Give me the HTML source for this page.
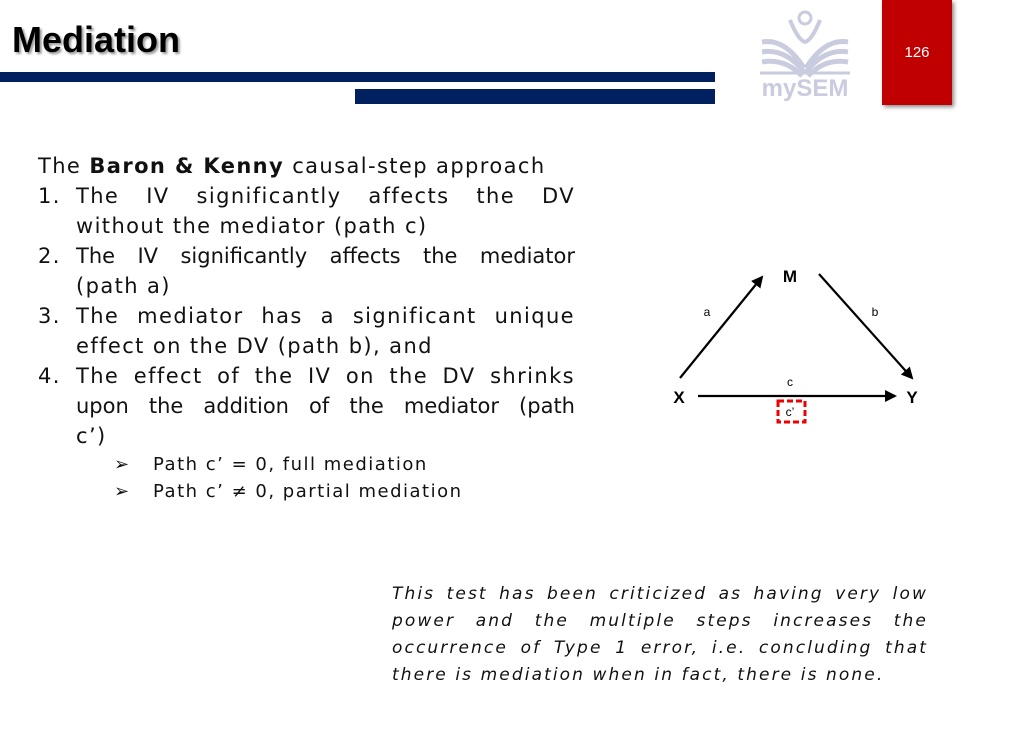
<!DOCTYPE html>
<html><head><meta charset="utf-8"><style>
html,body{margin:0;padding:0}
body{width:1010px;height:750px;position:relative;background:#fff;overflow:hidden;font-family:"DejaVu Sans","Liberation Sans",sans-serif;color:#111}
.a{position:absolute;white-space:nowrap}
.t{font-family:"Liberation Sans Narrow","Liberation Sans",sans-serif;font-weight:bold;font-size:36px;left:12px;top:19px;text-shadow:2px 2px 2px #999;color:#000}
.bar{position:absolute;background:#002060}
.ln{position:absolute;font-size:21px;line-height:30px;height:30px;white-space:nowrap;letter-spacing:1.4px}
.j{text-align:justify;text-align-last:justify}
.it{position:absolute;left:392px;width:536px;font-style:italic;font-size:17px;line-height:27px;height:27px;white-space:nowrap;letter-spacing:2.1px}
</style></head><body>
<div class="a t">Mediation</div>
<div class="bar" style="left:0;top:72px;width:715px;height:10px"></div>
<div class="bar" style="left:355px;top:89px;width:360px;height:15px"></div>
<div style="position:absolute;left:882px;top:0;width:70px;height:105px;background:#c00000;box-shadow:2px 2px 4px #888"></div>
<div class="a" style="left:882px;width:70px;top:44px;text-align:center;color:#fff;font-family:'Liberation Sans',sans-serif;font-size:15px">126</div>
<svg style="position:absolute;left:740px;top:0" width="130" height="105">
<g fill="none" stroke="#c9cbdf" stroke-width="5">
<circle cx="65" cy="18" r="6" stroke-width="3"/>
<path d="M50 20 Q58 40 65 42 Q72 40 80 20" stroke-width="4"/>
<path d="M22 42 Q45 38 64 68 M22 52 Q45 48 64 72 M22 62 Q45 58 62 76"/>
<path d="M108 42 Q85 38 66 68 M108 52 Q85 48 66 72 M108 62 Q85 58 68 76"/>
<path d="M20 73 L110 73" stroke-width="3"/>
</g>
<text x="65" y="96" text-anchor="middle" font-family="Liberation Sans" font-weight="bold" font-size="24" fill="#c9cbdf">mySEM</text>
</svg>

<div class="ln" style="left:38px;top:151px">The <b>Baron &amp; Kenny</b> causal-step approach</div>
<div class="ln" style="left:38px;top:181px">1.</div>
<div class="ln j" style="left:76px;width:499px;top:181px">The IV significantly affects the DV</div>
<div class="ln" style="left:76px;top:211px">without the mediator (path c)</div>
<div class="ln" style="left:38px;top:241px">2.</div>
<div class="ln j" style="left:76px;width:499px;top:241px;letter-spacing:0">The IV significantly affects the mediator</div>
<div class="ln" style="left:76px;top:271px">(path a)</div>
<div class="ln" style="left:38px;top:301px">3.</div>
<div class="ln j" style="left:76px;width:499px;top:301px">The mediator has a significant unique</div>
<div class="ln" style="left:76px;top:331px">effect on the DV (path b), and</div>
<div class="ln" style="left:38px;top:361px">4.</div>
<div class="ln j" style="left:76px;width:499px;top:361px">The effect of the IV on the DV shrinks</div>
<div class="ln j" style="left:76px;width:499px;top:391px;letter-spacing:0">upon the addition of the mediator (path</div>
<div class="ln" style="left:76px;top:421px">c’)</div>
<div class="ln" style="left:114px;top:450px;font-size:18px">&#10146;</div>
<div class="ln" style="left:153px;top:450px;font-size:18px;letter-spacing:1.5px">Path c’ = 0, full mediation</div>
<div class="ln" style="left:114px;top:477px;font-size:18px">&#10146;</div>
<div class="ln" style="left:153px;top:477px;font-size:18px;letter-spacing:1.5px">Path c’ ≠ 0, partial mediation</div>

<svg style="position:absolute;left:660px;top:250px" width="280" height="180" font-family="Liberation Sans,sans-serif">
<defs><marker id="ar" markerWidth="12" markerHeight="12" refX="10" refY="6" orient="auto" markerUnits="userSpaceOnUse"><path d="M0 0 L12 6 L0 12 Z" fill="#000"/></marker></defs>
<g stroke="#000" stroke-width="2.2">
<line x1="20" y1="128" x2="102" y2="27" marker-end="url(#ar)"/>
<line x1="159" y1="24" x2="252" y2="128" marker-end="url(#ar)"/>
<line x1="38" y1="146" x2="235" y2="146" marker-end="url(#ar)"/>
</g>
<text x="130" y="32" text-anchor="middle" font-weight="bold" font-size="17">M</text>
<text x="19" y="153" text-anchor="middle" font-weight="bold" font-size="17">X</text>
<text x="252" y="153" text-anchor="middle" font-weight="bold" font-size="17">Y</text>
<text x="47" y="66" text-anchor="middle" font-size="12">a</text>
<text x="215" y="66" text-anchor="middle" font-size="12">b</text>
<text x="130" y="136" text-anchor="middle" font-size="12">c</text>
<text x="130" y="166" text-anchor="middle" font-size="12">c’</text>
<rect x="118" y="151" width="27" height="21" fill="none" stroke="#e00" stroke-width="3" stroke-dasharray="6 3"/>
</svg>

<div class="it j" style="top:581px">This test has been criticized as having very low</div>
<div class="it j" style="top:608px">power and the multiple steps increases the</div>
<div class="it j" style="top:635px">occurrence of Type 1 error, i.e. concluding that</div>
<div class="it" style="top:662px">there is mediation when in fact, there is none.</div>
</body></html>
